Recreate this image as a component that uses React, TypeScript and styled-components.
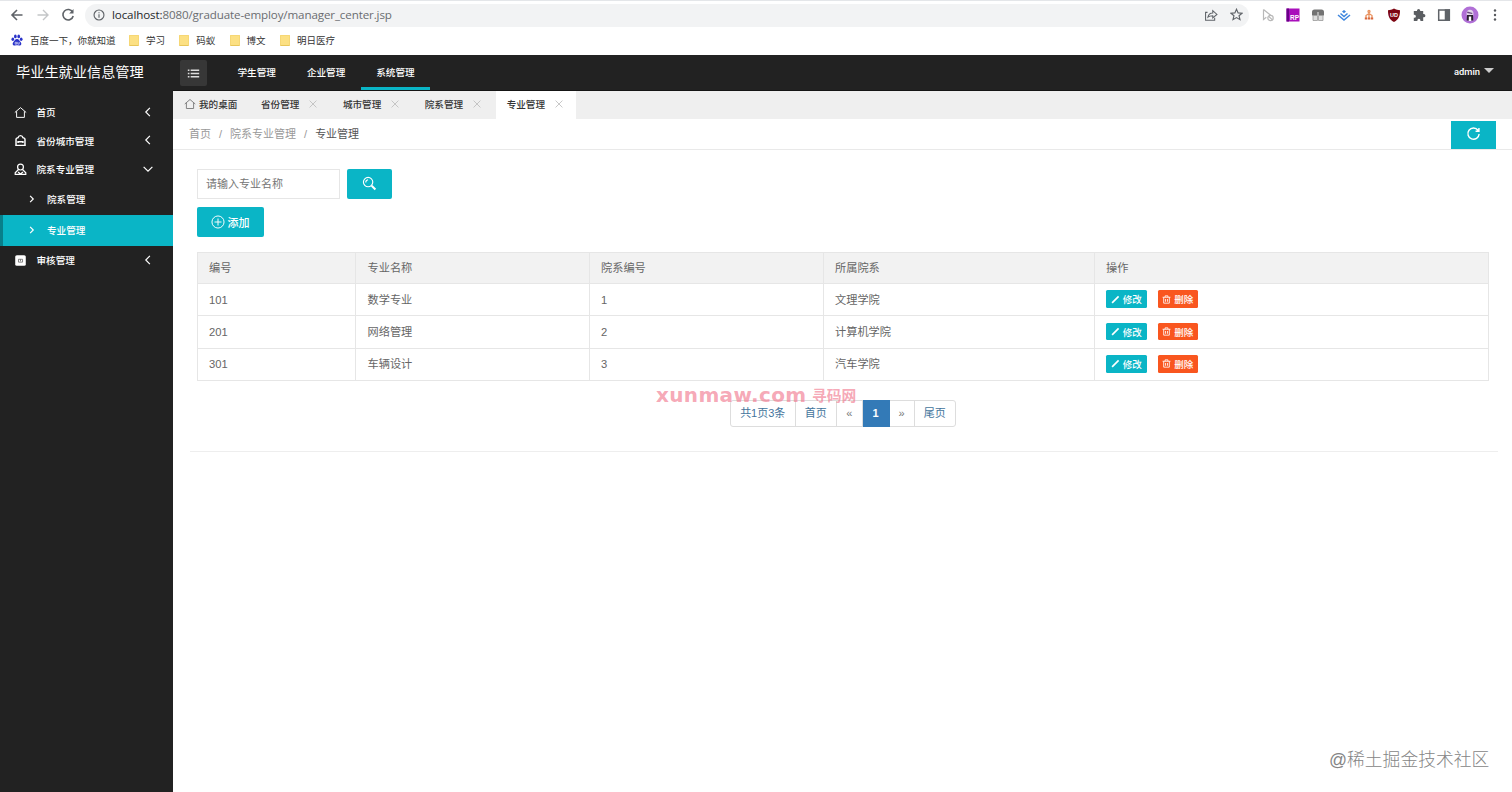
import React from "react";
import styled, { createGlobalStyle } from "styled-components";

const teal = "#0ab5c6";
const dark = "#222222";

const GlobalStyle = createGlobalStyle`
  * { box-sizing: border-box; }
  html, body { margin: 0; padding: 0; background: #fff; }
  body {
    font-family: "Liberation Sans", "Noto Sans CJK SC", sans-serif;
    font-size: 11px;
    color: #666;
    overflow: hidden;
  }
  svg { display: block; flex: none; }
`;

const Page = styled.div`
  display: flex;
  flex-direction: column;
  width: 1512px;
  height: 792px;
  position: relative;
`;

/* ---------- browser chrome ---------- */
const Chrome = styled.div`
  flex: none;
  height: 55px;
  border-top: 1px solid #e4e6e9;
  background: #fff;
`;
const Toolbar = styled.div`
  display: flex;
  align-items: center;
  height: 28px;
  padding-left: 9px;
`;
const NavIcons = styled.div`
  display: flex;
  gap: 9.5px;
  width: 76px;
`;
const AddressBar = styled.div`
  display: flex;
  align-items: center;
  width: 1164px;
  height: 23px;
  padding: 0 6px 0 8px;
  border-radius: 12px;
  background: #f2f3f4;
`;
const Url = styled.div`
  flex: 1;
  margin-left: 7px;
  font-family: "Open Sans", "Noto Sans", sans-serif;
  font-size: 11.6px;
  letter-spacing: -0.12px;
  line-height: 20px;
  white-space: nowrap;
  color: #6a6d70;
  b { font-weight: 400; color: #26282b; }
`;
const BarIcons = styled.div`
  display: flex;
  gap: 12px;
`;
const Extensions = styled.div`
  display: flex;
  align-items: center;
  gap: 9.2px;
  margin-left: 11px;
  svg { width: 16px; height: 16px; }
`;
const Bookmarks = styled.div`
  display: flex;
  align-items: center;
  height: 22px;
  padding-left: 11px;
  color: #333;
`;
const Bookmark = styled.div<{ $w: number }>`
  display: flex;
  flex: none;
  align-items: center;
  width: ${(p) => p.$w}px;
  gap: 7px;
  font-family: "Noto Sans CJK SC", sans-serif;
  font-size: 9.5px;
  line-height: 14px;
  white-space: nowrap;
`;
const Folder = styled.i`
  flex: none;
  width: 10px;
  height: 11px;
  border-radius: 1px;
  background: #fce083;
  border: 1px solid #f6d775;
  border-bottom-color: #e8c65a;
`;

/* ---------- application ---------- */
const AppBody = styled.div`
  flex: 1;
  display: flex;
  min-height: 0;
`;
const Sidebar = styled.aside`
  flex: none;
  width: 173px;
  background: ${dark};
  color: #fff;
`;
const Brand = styled.div`
  height: 43px;
  padding: 7px 0 0 16px;
  font-size: 14.2px;
  line-height: 20px;
  white-space: nowrap;
`;
const MenuItem = styled.div<{ $h?: number }>`
  display: flex;
  align-items: center;
  height: ${(p) => p.$h ?? 28.5}px;
  padding: 0 20.5px 0 14px;
  font-size: 9.6px;
  font-weight: 500;
  font-family: "Noto Sans CJK SC", sans-serif;
  line-height: 14px;
  span { flex: 1; margin-left: 9.5px; }
  svg:last-child { margin-top: -1.5px; }
`;
const SubItem = styled.div<{ $active?: boolean }>`
  display: flex;
  align-items: center;
  gap: 10px;
  height: 31.3px;
  padding-left: 24px;
  border-left: 3px solid ${(p) => (p.$active ? "#087f8b" : dark)};
  background: ${(p) => (p.$active ? teal : dark)};
  font: 500 9.6px/14px "Noto Sans CJK SC", sans-serif;
`;
const Main = styled.main`
  flex: 1;
  min-width: 0;
  display: flex;
  flex-direction: column;
`;
const Header = styled.header`
  display: flex;
  flex: none;
  height: 36px;
  padding-left: 7px;
  background: ${dark};
  border-bottom: 1px solid #151515;
  color: #fff;
`;
const Toggle = styled.button`
  display: flex;
  align-items: center;
  justify-content: center;
  width: 27px;
  height: 26px;
  margin: 5px 15px 0 0;
  padding: 0;
  border: 0;
  border-radius: 2px;
  background: #373737;
`;
const TopLink = styled.div<{ $active?: boolean }>`
  width: 69.4px;
  height: 35px;
  padding-top: 10px;
  text-align: center;
  font: 500 9.6px/14px "Noto Sans CJK SC", sans-serif;
  border-bottom: 3.5px solid ${(p) => (p.$active ? teal : "transparent")};
`;
const User = styled.div`
  display: flex;
  gap: 4px;
  margin-left: auto;
  padding: 10px 18px 0 0;
  font: 500 9.4px/14px Roboto, sans-serif;
  &::after {
    content: "";
    margin-top: 3px;
    height: 0;
    border: 5px solid transparent;
    border-top-color: #ccc;
    border-bottom: 0;
  }
`;
const Tabs = styled.div`
  display: flex;
  flex: none;
  height: 28px;
  background: #efefef;
`;
const Tab = styled.div<{ $active?: boolean; $w?: number }>`
  display: flex;
  align-items: center;
  gap: 3px;
  width: ${(p) => p.$w ?? 81.9}px;
  padding: 0 0 2px 11px;
  font: 500 9.6px/14px "Noto Sans CJK SC", sans-serif;
  white-space: nowrap;
  color: #333;
  background: ${(p) => (p.$active ? "#fff" : "transparent")};
  span + svg { margin-left: 5.5px; }
`;
const Crumbs = styled.div`
  display: flex;
  flex: none;
  height: 31px;
  padding: 0 16px 0 16px;
  border-bottom: 1px solid #e9e9e9;
  line-height: 30px;
  color: #999;
  span + span::before { content: "/"; margin: 0 8px; color: #999; }
  span:last-of-type { color: #555; }
`;
const Refresh = styled.button`
  display: flex;
  align-items: center;
  justify-content: center;
  width: 45px;
  height: 28px;
  margin: 2px 0 0 auto;
  padding: 0 1px 3px 0;
  border: 0;
  background: ${teal};
`;
const Content = styled.section`
  margin: 0 14px 0 17px;
  height: 302px;
  padding: 19px 9px 0 7px;
  border-bottom: 1px solid #eee;
`;
const SearchRow = styled.div`
  display: flex;
  gap: 7px;
  margin-bottom: 8px;
`;
const Input = styled.input`
  width: 143px;
  height: 30px;
  padding: 0 8px;
  border: 1px solid #e6e6e6;
  outline: none;
  font: 11px "Liberation Sans", "Noto Sans CJK SC", sans-serif;
  &::placeholder { color: #757575; }
`;
const Button = styled.button<{ $w: number }>`
  display: flex;
  align-items: center;
  justify-content: center;
  gap: 3px;
  width: ${(p) => p.$w}px;
  height: 30px;
  padding: 0 1px 1px 0;
  border: 0;
  border-radius: 2px;
  background: ${teal};
  color: #fff;
  font: 500 11px/16px "Noto Sans CJK SC", sans-serif;
`;
const Table = styled.table`
  width: 1291.5px;
  margin: 15px 0 0 -0.5px;
  border-collapse: collapse;
  table-layout: fixed;
  font-size: 11.2px;
  th, td {
    border: 1px solid #e6e6e6;
    padding: 0 0 0 11.5px;
    text-align: left;
    font-weight: 400;
    line-height: 16px;
  }
  th { height: 31px; background: #f2f2f2; }
  td { height: 32.4px; }
`;
const Actions = styled.div`
  display: flex;
  gap: 11px;
  margin-bottom: 1px;
`;
const SmallButton = styled.button<{ $danger?: boolean }>`
  display: flex;
  align-items: center;
  justify-content: center;
  gap: 3px;
  width: 40.5px;
  height: 17.5px;
  padding: 0;
  border: 0;
  border-radius: 1.5px;
  background: ${(p) => (p.$danger ? "#f9561f" : teal)};
  color: #fff;
  font: 500 9.5px/14px "Noto Sans CJK SC", sans-serif;
`;
const Pager = styled.div`
  display: flex;
  width: 226px;
  height: 27px;
  margin: 19px 0 0 533px;
  border: 1px solid #ddd;
  border-radius: 3px;
`;
const PageCell = styled.div<{ $w: number; $current?: boolean; $arrow?: boolean }>`
  width: ${(p) => p.$w}px;
  margin: ${(p) => (p.$current ? "-1px 0" : "0")};
  padding-top: ${(p) => (p.$current ? 1 : 0)}px;
  text-align: center;
  line-height: 25px;
  border-right: 1px solid #ddd;
  ${(p) => p.$current && "border-right-color: #337ab7; background: #337ab7;"}
  color: ${(p) => (p.$current ? "#fff" : p.$arrow ? "#777" : "#43749c")};
  font-weight: ${(p) => (p.$current ? 700 : 400)};
  &:last-child { border-right: 0; }
`;
const SiteMark = styled.div`
  position: absolute;
  left: 656px;
  top: 386px;
  display: flex;
  align-items: baseline;
  gap: 6px;
  line-height: 18px;
  white-space: nowrap;
  color: rgba(240, 112, 136, 0.62);
  font: 700 14.8px/18px "Noto Sans CJK SC", sans-serif;
  b {
    width: 150px;
    font: 700 20px/18px "DejaVu Sans", sans-serif;
    letter-spacing: 0.35px;
  }
  span { position: relative; top: -1px; }
`;
const Community = styled.div`
  position: absolute;
  left: 1329px;
  top: 748px;
  font: 300 17.8px/24px "Liberation Sans", "Noto Sans CJK SC", sans-serif;
  white-space: nowrap;
  color: #858585;
`;

/* ---------- icons ---------- */
type IconProps = { size?: number; color?: string; w?: number; children: React.ReactNode };
const Icon = ({ size = 16, color = "#5f6368", w = 1.4, children }: IconProps) => (
  <svg width={size} height={size} viewBox="0 0 16 16" fill="none" stroke={color} strokeWidth={w}>
    {children}
  </svg>
);
const Cross = () => (
  <Icon size={10} color="#bbb" w={1.3}><path d="M2.5 2.5l11 11M13.5 2.5l-11 11" /></Icon>
);
const Home = ({ size = 13, color = "#fff" }) => (
  <Icon size={size} color={color} w={1.2}><path d="M1 8l7-6 7 6M3.2 6.5V14h9.6V6.5" /></Icon>
);
const Chevron = ({ d }: { d: string }) => (
  <Icon size={10} color="#fff" w={1.9}><path d={d} /></Icon>
);
const left = "M11 1.5L4.5 8l6.5 6.5";
const right = "M5 3l5 5-5 5";
const down = "M1 4.5l7 7 7-7";

const rows = [
  ["101", "数学专业", "1", "文理学院"],
  ["201", "网络管理", "2", "计算机学院"],
  ["301", "车辆设计", "3", "汽车学院"],
];
const columns: [string, number][] = [["编号", 158.5], ["专业名称", 233.5], ["院系编号", 234], ["所属院系", 271], ["操作", 394.5]];

const BrowserChrome = () => (
  <Chrome>
    <Toolbar>
      <NavIcons>
        <Icon w={1.6}><path d="M13.5 8H3M8 3L3 8l5 5" /></Icon>
        <Icon color="#c4c6c8"><path d="M2.5 8H13M8 3l5 5-5 5" /></Icon>
        <Icon w={1.6}><path d="M12.7 5.2A5.2 5.2 0 1 0 13.2 9" /><path d="M13.5 2v4.4H9.2z" fill="#5f6368" stroke="none" /></Icon>
      </NavIcons>
      <AddressBar>
        <Icon size={12} w={1.5}><circle cx="8" cy="8" r="6.6" /><path d="M8 7v4.6M8 4.2v1.6" /></Icon>
        <Url><b>localhost:</b>8080/graduate-employ/manager_center.jsp</Url>
        <BarIcons>
          <Icon size={14} w={1.2}><path d="M4 5H1.8v9h10.4v-3M4.5 10.5C5 7 7 5.6 10 5.6V3l4.8 4.3L10 11.4V8.8c-2.4 0-4 .3-5.5 1.7z" /></Icon>
          <Icon size={13} w={1.4}><path d="M8 1.5l2 4.5 4.8.4-3.7 3.1 1.2 4.8L8 11.8l-4.3 2.5 1.2-4.8L1.2 6.4 6 6z" /></Icon>
        </BarIcons>
      </AddressBar>
      <Extensions>
        <Icon color="#b9b9b9" w={1.2}><path d="M3.500 2.500v10l2.800-2.200M3.500 2.500l7.500 6" /><circle cx="10.5" cy="11" r="2.7" /><path d="M8.600 9.200l3.800 3.700" /></Icon>
        <svg viewBox="0 0 16 16"><path fill="#a90fbb" d="M1.500 1.500h13v13h-13z" /><path fill="#690087" d="M1.500 1.500H4v13H1.500z" /><text x="5" y="12.5" fontSize="6.5" fontWeight="700" fill="#fff" fontFamily="Liberation Sans">RP</text></svg>
        <svg viewBox="0 0 16 16"><path fill="#737373" d="M4.500 2.500h7a2.500 2.500 0 0 1 2.500 2.500V8.500H2V5a2.500 2.500 0 0 1 2.500-2.500z" /><path fill="#ddd" stroke="#999" strokeWidth=".8" d="M3 8.500h4.500v5H3zM8.500 8.500H13v5H8.500z" /><path stroke="#eee" d="M8 5v3.500" /></svg>
        <Icon color="#3e86de" w={1.5}><path d="M2 8l6 5 6-5M4.500 6.500L8 9.500l3.500-3" /><path d="M8 3l2 1.600L8 6.200 6 4.600z" fill="#3e86de" stroke="none" /></Icon>
        <Icon color="#e9925f" w={1.3}><path d="M8 5v6M5 11V8.500L8 6.500l3 2V11" /><circle cx="8" cy="4.5" r="1" /><path d="M3.800 10.500h2.400v2H3.800zM6.800 10.500h2.400v2H6.800zM9.800 10.500h2.400v2H9.800z" fill="#d9683c" stroke="none" /></Icon>
        <svg viewBox="0 0 16 16"><path fill="#7d0613" d="M8 1.500c2 1.300 4 1.700 6 1.700 0 5-.8 9-6 11.800C2.800 12.200 2 8.200 2 3.200c2 0 4-.4 6-1.700z" /><text x="8" y="9.7" textAnchor="middle" fontSize="5.5" fontWeight="700" fill="#fff" fontFamily="Liberation Sans">UD</text></svg>
        <svg viewBox="0 0 16 16"><path fill="#5b5e62" d="M6 4V3.500a1.600 1.600 0 0 1 3.200 0V4h3v3.100h.6a1.600 1.600 0 0 1 0 3.200h-.6V14H9.400v-.7a1.500 1.500 0 0 0-3 0v.7H2.800v-3.300h.6a1.500 1.500 0 0 0 0-3h-.6V4z" /></svg>
        <Icon w={1.5}><path d="M2.700 3h10.600v10.200H2.700z" /><path d="M9.500 3h3.800v10.200H9.500z" fill="#5f6368" /></Icon>
        <svg viewBox="0 0 16 16" overflow="visible"><circle cx="8" cy="8" r="8.5" fill="#b06fd6" /><path fill="#e2d5ea" d="M4.500 7C4.500 4 6 2.800 8 2.800s3.500 1.200 3.500 4.200L11 9H5z" /><path fill="#6b4a80" d="M5.500 4.500l5 1.500-.5 1-5-1z" /><path fill="#29202f" d="M5 8h6l.3 5.500H4.700z" /><path fill="#fff" d="M6.800 9.500h2.400V14H6.800z" /></svg>
        <svg viewBox="0 0 16 16" fill="#55585c"><circle cx="8" cy="3.5" r="1.2" /><circle cx="8" cy="8" r="1.2" /><circle cx="8" cy="12.5" r="1.2" /></svg>
      </Extensions>
    </Toolbar>
    <Bookmarks>
      <Bookmark $w={118}>
        <svg width="12" height="12" viewBox="0 0 16 16" fill="#2932c9"><ellipse cx="5.8" cy="3.2" rx="1.8" ry="2.5" /><ellipse cx="10.3" cy="3.2" rx="1.8" ry="2.5" /><ellipse cx="2.4" cy="7" rx="1.8" ry="2.2" /><ellipse cx="13.6" cy="7" rx="1.8" ry="2.2" /><path d="M8 6.700c2.500 0 3 2.300 5 4.200 2 2.600-.3 4.800-2.300 4.500-2-.4-3.400-.4-5.400 0C3.300 15.700 1 13.500 3 10.900c2-1.900 2.500-4.200 5-4.200z" /><path d="M5.500 11h2v2.500h-2zM9 10.500v3h2v-3" stroke="#fff" strokeWidth=".8" fill="none" /></svg>
        百度一下，你就知道
      </Bookmark>
      {["学习", "码蚁", "博文", "明日医疗"].map((name) => (
        <Bookmark key={name} $w={50.3}><Folder />{name}</Bookmark>
      ))}
    </Bookmarks>
  </Chrome>
);

const SideMenu = () => (
  <Sidebar>
    <Brand>毕业生就业信息管理</Brand>
    <MenuItem><Home /><span>首页</span><Chevron d={left} /></MenuItem>
    <MenuItem>
      <Icon size={13} color="#fff" w={1.8}><path d="M2.500 14V6.500C2.500 5 4 5 5 4.500 5.500 2.500 6.500 2 8 2s2.500.5 3 2.500c1 .5 2.500.5 2.500 2V14zM1.500 14h13" /><path d="M5 11V9.500h6V11" /></Icon>
      <span>省份城市管理</span><Chevron d={left} />
    </MenuItem>
    <MenuItem>
      <Icon size={13} color="#fff" w={1.5}><circle cx="8" cy="5" r="3.6" /><path d="M5.500 8L1.500 12v2h13v-2l-4-4M5 11l3 2.500 3-2.500" /></Icon>
      <span>院系专业管理</span><Chevron d={down} />
    </MenuItem>
    <SubItem><Chevron d={right} />院系管理</SubItem>
    <SubItem $active><Chevron d={right} />专业管理</SubItem>
    <MenuItem $h={28.5}>
      <svg width="13" height="13" viewBox="0 0 16 16"><rect x="1.5" y="1.5" width="13" height="13" rx="2" fill="#fff" /><path d="M5.500 6.500h5v3.500h-5zM8 6.500V9" fill="none" stroke="#666" /></svg>
      <span>审核管理</span><Chevron d={left} />
    </MenuItem>
  </Sidebar>
);

export default function App() {
  return (
    <Page>
      <GlobalStyle />
      <BrowserChrome />
      <AppBody>
        <SideMenu />
        <Main>
          <Header>
            <Toggle><Icon size={13} color="#ddd" w={1.6}><path d="M4.500 4H15M4.500 8H15M4.500 12H15M1 4h2M1 8h2M1 12h2" /></Icon></Toggle>
            <TopLink>学生管理</TopLink>
            <TopLink>企业管理</TopLink>
            <TopLink $active>系统管理</TopLink>
            <User>admin</User>
          </Header>
          <Tabs>
            <Tab $w={77}><Home size={12} color="#777" />我的桌面</Tab>
            <Tab><span>省份管理</span><Cross /></Tab>
            <Tab><span>城市管理</span><Cross /></Tab>
            <Tab><span>院系管理</span><Cross /></Tab>
            <Tab $active $w={80.5}><span>专业管理</span><Cross /></Tab>
          </Tabs>
          <Crumbs>
            <span>首页</span><span>院系专业管理</span><span>专业管理</span>
            <Refresh><Icon size={15} color="#fff" w={1.5}><path d="M12.800 4.500A6 6 0 1 0 14 8.500M13.800 2v3.600h-3.600" /></Icon></Refresh>
          </Crumbs>
          <Content>
            <SearchRow>
              <Input placeholder="请输入专业名称" />
              <Button $w={45}><Icon size={15} color="#fff" w={1.2}><circle cx="6.5" cy="6.5" r="5" /><path d="M4 7a3 3 0 0 1 2.500-3" /><path d="M10.300 10.300l4 4" strokeWidth="2.2" /></Icon></Button>
            </SearchRow>
            <Button $w={67}><Icon size={14} color="#fff" w={1.1}><circle cx="8" cy="8" r="6.9" /><path d="M8 4v8M4 8h8" /></Icon>添加</Button>
            <Table>
              <colgroup>{columns.map(([name, w]) => <col key={name} width={w} />)}</colgroup>
              <thead><tr>{columns.map(([name]) => <th key={name}>{name}</th>)}</tr></thead>
              <tbody>
                {rows.map((row) => (
                  <tr key={row[0]}>
                    {row.map((cell) => <td key={cell}>{cell}</td>)}
                    <td>
                      <Actions>
                        <SmallButton><Icon size={9} color="#fff" w={3}><path d="M2 14L13.500 2.500" /></Icon>修改</SmallButton>
                        <SmallButton $danger><Icon size={9} color="#fff" w={1.5}><path d="M1 4h14M5.500 4V1.500h5V4M3 4v10.500h10V4M6.300 7v5M9.700 7v5" /></Icon>删除</SmallButton>
                      </Actions>
                    </td>
                  </tr>
                ))}
              </tbody>
            </Table>
            <Pager>
              <PageCell $w={64.5}>共1页3条</PageCell>
              <PageCell $w={41.5}>首页</PageCell>
              <PageCell $w={25.5} $arrow>«</PageCell>
              <PageCell $w={27} $current>1</PageCell>
              <PageCell $w={25} $arrow>»</PageCell>
              <PageCell $w={40.5}>尾页</PageCell>
            </Pager>
          </Content>
        </Main>
      </AppBody>
      <SiteMark><b>xunmaw.com</b><span>寻码网</span></SiteMark>
      <Community>@稀土掘金技术社区</Community>
    </Page>
  );
}
